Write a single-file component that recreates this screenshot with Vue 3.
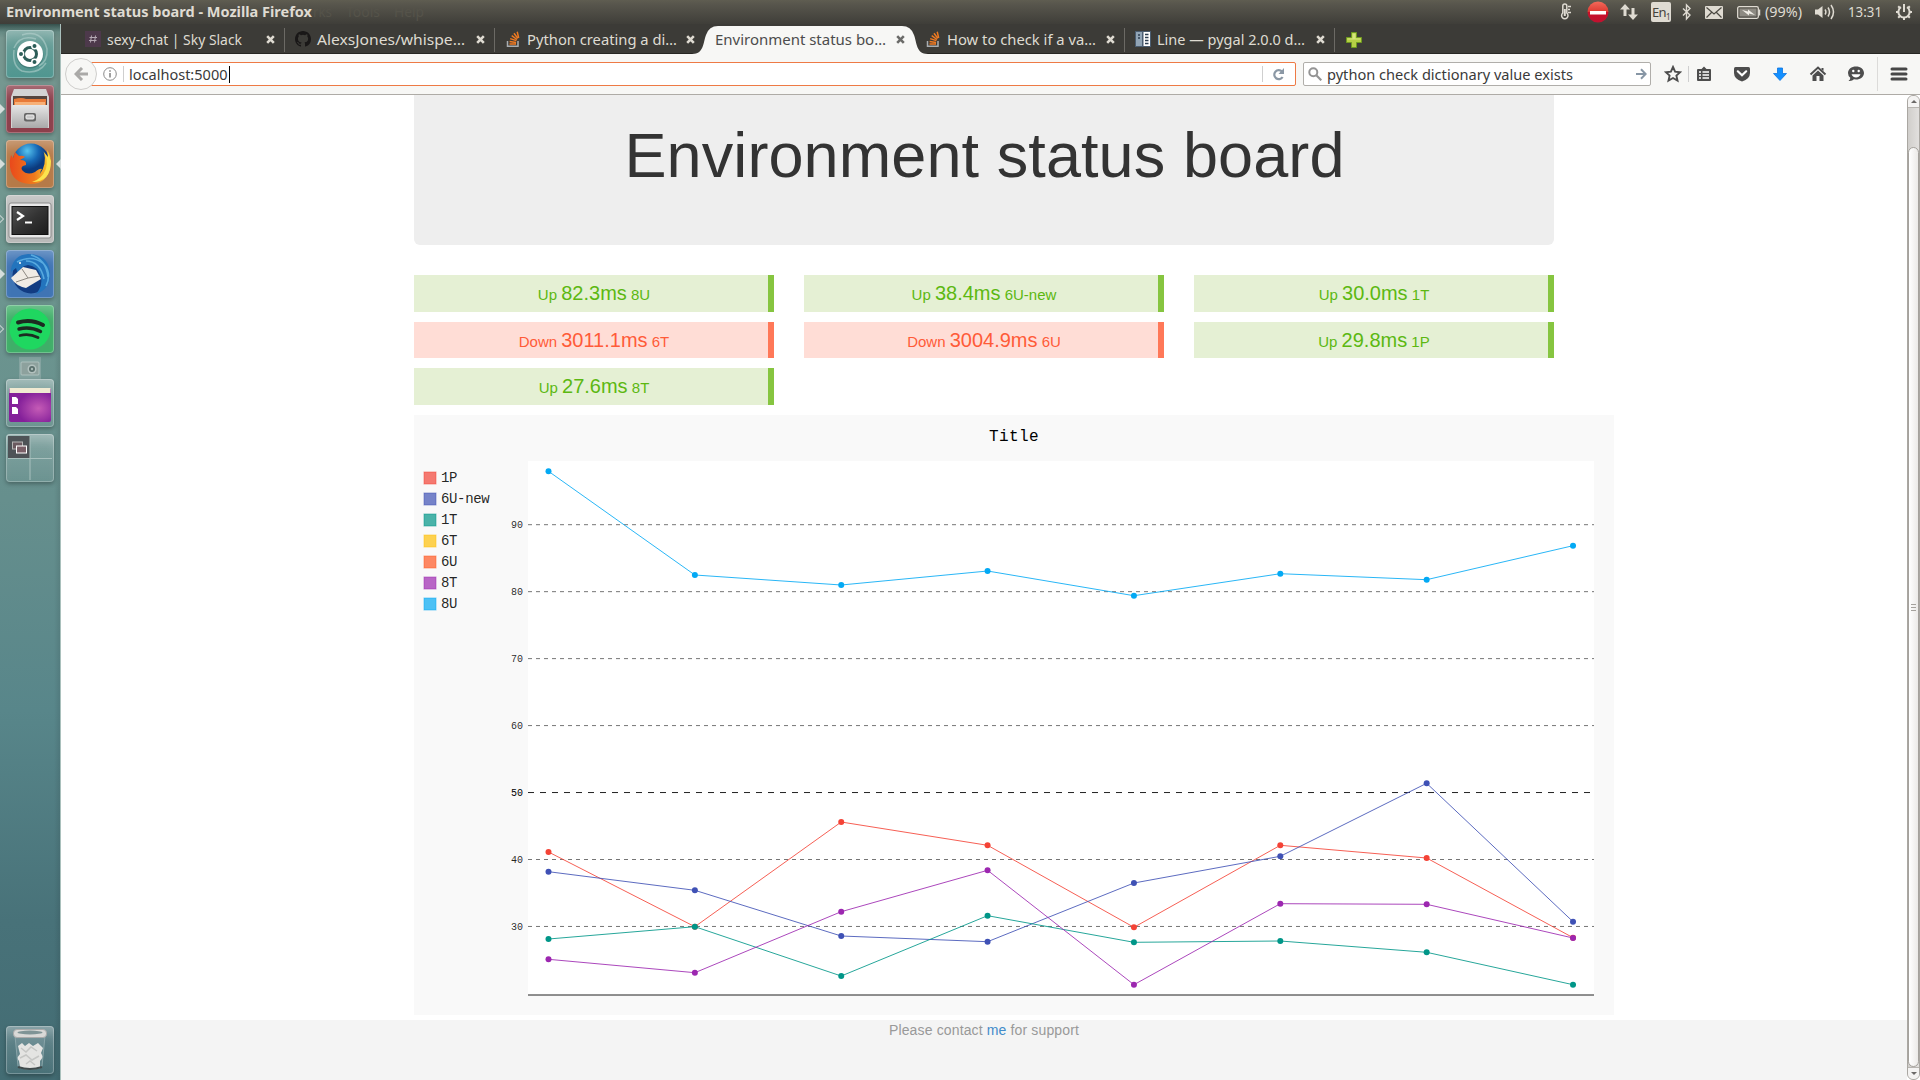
<script setup>
import { h } from 'vue'

// One-line label stretched to an exact width
const Label = (p) =>
  h('svg', { class: 'label', width: p.w + 2, height: 20, fill: 'currentColor' }, [
    h('text', { x: 0, y: p.y || 16, textLength: p.w, lengthAdjust: 'spacingAndGlyphs' }, p.t),
  ])
Label.props = ['t', 'w', 'y']

const tabs = [
  { icon: 'slack', text: 'sexy-chat | Sky Slack', w: 135 },
  { icon: 'github', text: 'AlexsJones/whispe…', w: 148 },
  { icon: 'so', text: 'Python creating a di…', w: 150 },
  { text: 'Environment status bo…', w: 171, active: true },
  { icon: 'so', text: 'How to check if a va…', w: 149 },
  { icon: 'docs', text: 'Line — pygal 2.0.0 d…', w: 148 },
]

const hosts = [
  { state: 'Up', time: '82.3ms', name: '8U' },
  { state: 'Up', time: '38.4ms', name: '6U-new' },
  { state: 'Up', time: '30.0ms', name: '1T' },
  { state: 'Down', time: '3011.1ms', name: '6T' },
  { state: 'Down', time: '3004.9ms', name: '6U' },
  { state: 'Up', time: '29.8ms', name: '1P' },
  { state: 'Up', time: '27.6ms', name: '8T' },
]

const legend = [
  ['1P', '#f44336'],
  ['6U-new', '#3f51b5'],
  ['1T', '#009688'],
  ['6T', '#ffc107'],
  ['6U', '#ff5722'],
  ['8T', '#9c27b0'],
  ['8U', '#03a9f4'],
]

const series = [
  { color: '#f44336', y: [437, 511.7, 407, 430.3, 512.3, 430.3, 443, 522.7] },
  { color: '#3f51b5', y: [456.7, 475.3, 521, 526.7, 468, 441.3, 368.3, 506.7] },
  { color: '#009688', y: [524, 511.7, 561, 500.7, 527.3, 526, 537.3, 569.7] },
  { color: '#9c27b0', y: [544.3, 557.7, 496.7, 455.3, 569.7, 488.7, 489.3, 523] },
  { color: '#03a9f4', y: [56.3, 160, 170, 156, 180.7, 158.7, 164.7, 130.7] },
]
const px = (i) => 134.5 + i * 146.36
const points = (ys) => ys.map((y, i) => `${px(i)},${y}`).join(' ')
const guides = [90, 80, 70, 60, 50, 40, 30].map((v) => ({ v, y: 109.7 + (90 - v) * 6.696 }))
</script>

<template>
  <div class="desktop">
    <header class="panel">
      <Label class="wintitle" t="Environment status board - Mozilla Firefox" :w="306" :y="15" />
      <div class="ghost"><Label t="rks" :w="19" :y="15" /><Label t="Tools" :w="34" :y="15" /><Label t="Help" :w="30" :y="15" /></div>
      <div class="tray">
        <svg width="12" height="18" viewBox="0 0 12 18" fill="none" stroke="#dfdbd2" stroke-width="1.5">
          <path d="M2.8 10V3a2 2 0 0 1 4 0v7a3.2 3.2 0 1 1-4 0z" /><path d="M4.8 6v7" stroke-width="2" /><path d="M8 3.5h3M8 6.5h2M8 9.500h3" stroke-width="1.300" />
        </svg>
        <svg class="t-stop" width="22" height="22" viewBox="0 0 22 22">
          <defs><linearGradient id="rd" x2="0" y2="1"><stop offset="0" stop-color="#f26a5a" /><stop offset=".48" stop-color="#dd3b33" /><stop offset=".5" stop-color="#c8102a" /><stop offset="1" stop-color="#c01230" /></linearGradient></defs>
          <circle cx="11" cy="11" r="10.500" fill="url(#rd)" /><rect x="3" y="10" width="16" height="3.500" fill="#fff" />
        </svg>
        <svg class="t-net" width="18" height="18" viewBox="0 0 18 18" fill="#dfdbd2"><path d="M5 1l5 5.500H6.500V13h-3V6.500H0zM13 17l-5-5.500h3.500V5h3v6.500H18z" /></svg>
        <div class="lang">En<sub>1</sub></div>
        <svg class="t-bt" width="10" height="18" viewBox="0 0 10 18" fill="none" stroke="#dfdbd2" stroke-width="1.400"><path d="M1 5.500l7 6.500-3.500 4V2L8 5.500 1 12.500" /></svg>
        <svg class="t-mail" width="18" height="13" viewBox="0 0 18 13"><rect width="18" height="13" rx="1" fill="#dfdbd2" /><path d="M1.500 1.500L9 8l7.500-6.500M1.500 11.500l5-5M16.500 11.500l-5-5" stroke="#4c4a43" stroke-width="1.200" fill="none" /></svg>
        <svg class="t-bat" width="24" height="13" viewBox="0 0 24 13"><rect x=".7" y=".7" width="20.600" height="11.600" rx="1.500" fill="none" stroke="#dfdbd2" stroke-width="1.300" /><rect x="2.500" y="2.500" width="17" height="8" fill="#8d8a82" /><path d="M22.500 3.500v6" stroke="#dfdbd2" stroke-width="1.500" /><path d="M5 4l6 1.500V3.500L18 9l-6-1.500v2z" fill="#f0ede6" /></svg>
        <Label class="t-pct" t="(99%)" :w="37" :y="15" />
        <svg class="t-vol" width="20" height="18" viewBox="0 0 20 18" fill="none" stroke="#dfdbd2" stroke-width="1.500"><path d="M0 6.500h3L7.500 3v12L3 11.500H0z" fill="#dfdbd2" stroke="none" /><path d="M10 6.500q1.800 2.500 0 5M13 4.500q3 4.500 0 9M16 2q5 7 0 14" /></svg>
        <Label class="t-time" t="13:31" :w="34" :y="15" />
        <svg class="t-gear" width="18" height="18" viewBox="0 0 18 18" fill="none" stroke="#dfdbd2"><path d="M6 4.200a5.600 5.600 0 1 0 6 0" stroke-width="2" /><path d="M9 1v8" stroke-width="2" /><path d="M3.200 3.200l2 2M14.800 3.200l-2 2M1 9h2.500M14.500 9H17M3.200 14.800l2-2M14.800 14.800l-2-2M9 14.500V17" stroke-width="2" /></svg>
      </div>
    </header>

    <div class="body">
      <aside class="launcher">
        <div class="app dash">
          <svg viewBox="0 0 48 48"><g fill="none" stroke="#b9d6d2" stroke-opacity=".55" stroke-width="1.500"><path d="M16 5q20-6 25 14 1 12-8 17M40 33q-8 12-24 8Q6 36 8 20M8 18Q14 4 30 9" /></g><circle cx="24" cy="25" r="13.500" fill="#1d4d4b" opacity=".35" /><circle cx="24" cy="24" r="13" fill="#fff" /><circle cx="24" cy="24" r="6.500" fill="none" stroke="#2c5d58" stroke-width="3" /><g stroke="#fff" stroke-width="1.400" fill="#2c5d58"><circle cx="15" cy="24" r="2.700" /><circle cx="28.500" cy="16" r="2.700" /><circle cx="28.500" cy="32" r="2.700" /></g></svg>
        </div>
        <div class="app files">
          <i class="pip" />
          <svg viewBox="0 0 48 48">
            <defs><linearGradient id="fc" x2="0" y2="1"><stop offset="0" stop-color="#e6e6e6" /><stop offset="1" stop-color="#a9a9a9" /></linearGradient></defs>
            <path d="M8 4h32l3 8v31H5V12z" fill="#d3d3d3" /><rect x="7" y="11" width="34" height="10" fill="#55453e" /><path d="M8 14q8-2 12 0h20v6H8z" fill="#e87a38" /><path d="M9 17h30v4H9z" fill="#f7b077" /><rect x="6" y="20" width="36" height="23" rx="1" fill="url(#fc)" /><rect x="18" y="28" width="12" height="8.500" rx="2" fill="#666" /><rect x="20" y="30" width="8" height="4" rx="1" fill="#c9c9c9" stroke="#eee" /></svg>
        </div>
        <div class="app firefox">
          <i class="pip" /><i class="pip right" />
          <svg viewBox="0 0 48 48">
            <defs><radialGradient id="gl" cx=".4" cy=".2"><stop offset="0" stop-color="#57c4ee" /><stop offset=".6" stop-color="#1667b4" /><stop offset="1" stop-color="#0b3a7e" /></radialGradient><linearGradient id="fx" x2="1"><stop offset="0" stop-color="#e9491c" /><stop offset=".6" stop-color="#f07a1c" /><stop offset="1" stop-color="#fbd735" /></linearGradient></defs>
            <circle cx="25" cy="22" r="18.500" fill="url(#gl)" />
            <path d="M5 15l2 3 2-6 4 4q4-1 6 1l-5 3q7 0 6 5-6 1-4 5 5 6 13 2 5-4 7-3-2 2-2 5 7-10 4-22l4 5-1-7q5 6 3 16-2 18-20 18-18-1-20-17-1-6 1-12z" fill="url(#fx)" /><path d="M36 10q7 8 4 19-4 10-14 13 19 0 19-21l-3-7v4z" fill="#fce34e" /></svg>
        </div>
        <div class="app terminal">
          <i class="pip hollow" />
          <svg viewBox="0 0 48 48"><defs><linearGradient id="tm" x2="1" y2="1"><stop offset="0" stop-color="#555" /><stop offset=".5" stop-color="#333" /><stop offset="1" stop-color="#1c1c1c" /></linearGradient></defs><rect x="3" y="8" width="42" height="35" rx="2" fill="#e8e8e8" stroke="#8b8b8b" /><rect x="6" y="11.500" width="36" height="28" fill="url(#tm)" stroke="#111" /><path d="M11 17l6 4-6 4" stroke="#fff" stroke-width="2.200" fill="none" /><path d="M19 27.500h7" stroke="#fff" stroke-width="2" /></svg>
        </div>
        <div class="app thunderbird">
          <i class="pip" />
          <svg viewBox="0 0 48 48">
            <circle cx="25" cy="25" r="18.500" fill="#123c82" />
            <path d="M5 19Q8 5 22 4q20 0 22 18 1 17-14 22 7-8 5-17-3-11-13-12-8 1-10 9l-2-6-5 4z" fill="#2374bd" />
            <path d="M5 28L17 17l13 3 5 9-15 9q-10-2-15-10z" fill="#f0ebe4" /><path d="M16 19l6 9 12-2M22 28l-12 4" stroke="#8c8780" fill="none" /><path d="M11 12Q26 4 38 14q8 10 2 22M20 11q14 0 18 18M25 5q15 4 17 22" stroke="#57a9df" stroke-width="1.600" fill="none" /><circle cx="14" cy="13" r="1" fill="#fff" /></svg>
        </div>
        <div class="app spotify">
          <i class="pip hollow" />
          <svg viewBox="0 0 48 48"><circle cx="24" cy="24" r="20.500" fill="#1fd760" /><g fill="none" stroke="#1c2b21" stroke-linecap="round"><path d="M12 17.500q13-4 25 2.500" stroke-width="4" /><path d="M13 24q11-3 21.500 2.500" stroke-width="3.400" /><path d="M14 30.500q9-2.500 18 2" stroke-width="2.800" /></g></svg>
        </div>
        <svg class="shot" width="22" height="22" viewBox="0 0 22 22"><rect width="22" height="22" fill="#a4b9b5" opacity=".45" /><rect x="2" y="5" width="18" height="13" rx="1" fill="#8da19d" stroke="#b8c9c5" stroke-width=".8" /><circle cx="13" cy="12" r="4.500" fill="#b3c2bf" /><circle cx="13" cy="12" r="3" fill="#5a706d" /><circle cx="13" cy="12" r="1.200" fill="#a9bbb7" /></svg>
        <div class="app glass">
          <svg viewBox="0 0 48 48"><defs><radialGradient id="pp" cx=".7" cy=".6"><stop offset="0" stop-color="#c55bb6" /><stop offset="1" stop-color="#84209a" /></radialGradient></defs><rect x="3" y="9" width="42" height="34" rx="2" fill="url(#pp)" /><rect x="3.500" y="9" width="41" height="5" fill="#f0ead2" /><path d="M6 18h4l2 2v5H6zM6 28h4l2 2v5H6z" fill="#fff" /></svg>
        </div>
        <div class="app glass">
          <svg viewBox="0 0 48 48"><rect x="2" y="2" width="22" height="22" fill="#4e5357" /><path d="M24 2v44M2 24.500h44" stroke="#a8c0bd" stroke-width="1" /><rect x="6.500" y="8" width="10" height="7" fill="#6b5a60" stroke="#b5b5b5" /><rect x="10.500" y="12" width="10" height="7" fill="#7a6068" stroke="#fff" /></svg>
        </div>
        <div class="app glass trash">
          <svg viewBox="0 0 48 48"><path d="M9 9l3 31q1 4 12 4t12-4l3-31z" fill="#a9c0c4" opacity=".2" /><path d="M12 20l4-3 3 3 4-3 4 3 5-3 5 5-2 5 2 4-3 4v6q-10 4-20 0l-1-6-2-3 3-4z" fill="#e4e4e2" /><path d="M15 22l5 4 5-5 6 4M14 32l6-3 6 5 7-4M20 38l4-3 5 4" stroke="#c5c6c4" fill="none" stroke-width="1.500" /><path d="M9 10l3 30q1 3 12 3t12-3l3-30" stroke="#8aa5a9" fill="none" /><path d="M12 41q12 4 24 0" stroke="#404b4c" stroke-width="2" fill="none" /><rect x="7.500" y="3.500" width="33" height="8" rx="3.500" fill="#d9d9d7" stroke="#aaa" /><ellipse cx="24" cy="6.500" rx="12.500" ry="1.900" fill="#7f9496" /></svg>
        </div>
      </aside>

      <main class="browser">
        <nav class="tabs">
          <div v-for="(t, i) in tabs" :key="i" class="tab" :class="{ active: t.active, sep: !t.active && i !== 2 }">
            <svg v-if="t.active" class="shape" width="236" height="28" viewBox="0 0 236 28"><path d="M0 28C12 28 11 17 14 9Q17 0 26 0H210Q219 0 222 9C225 17 224 28 236 28z" fill="#f7f7f5" /></svg>
            <svg v-if="t.icon === 'slack'" class="fav" viewBox="0 0 16 16"><rect width="16" height="16" fill="#4d394b" /><path d="M6.500 4.500l-1 7M10.500 4.500l-1 7M4.500 6.500h7.500M4 9.500h7.500" stroke="#b5a9b4" fill="none" /></svg>
            <svg v-else-if="t.icon === 'github'" class="fav" viewBox="0 0 16 16"><path fill="#191717" d="M8 0C3.580 0 0 3.580 0 8c0 3.540 2.290 6.530 5.470 7.590.4.070.55-.17.55-.38v-1.490c-2.010.37-2.530-.49-2.690-.94-.09-.23-.48-.94-.82-1.130-.28-.15-.68-.52-.01-.53.63-.01 1.080.58 1.230.82.720 1.210 1.870.87 2.330.66.070-.52.28-.87.51-1.070-1.780-.2-3.640-.89-3.640-3.950 0-.87.310-1.590.82-2.150-.08-.2-.36-1.020.08-2.120 0 0 .67-.21 2.200.82a7.400 7.400 0 0 1 4 0c1.530-1.040 2.200-.82 2.200-.82.440 1.100.16 1.920.08 2.120.51.56.82 1.270.82 2.150 0 3.070-1.870 3.750-3.650 3.950.29.25.54.73.54 1.480v2.200c0 .21.15.46.55.38A8 8 0 0 0 16 8c0-4.420-3.580-8-8-8z" /></svg>
            <svg v-else-if="t.icon === 'so'" class="fav so" viewBox="0 0 16 16" fill="none"><path d="M2.500 10v5.300h10.500V10" stroke="#a9adb0" stroke-width="1.500" /><g stroke="#ef7a22" stroke-width="1.500"><path d="M4.500 13h6.500M4.600 10.500l6.500.9M5.200 7.600l6.200 2M6.700 4.700l5.300 3.800M9 2.200l3.800 5.200M12.200.8l1.500 6.200" /></g></svg>
            <svg v-else-if="t.icon === 'docs'" class="fav" viewBox="0 0 16 16"><rect width="16" height="16" fill="#4b5d70" /><rect x="1" y="1" width="6" height="14" fill="#91a4b5" /><rect x="8.500" y="1" width="6.500" height="14" fill="#fff" /><path d="M3 4h2M3 7h2M10 3.500h3.500M10 6.500h3.500M10 9.500h3.500M10 12.500h3.500" stroke="#2d3e50" stroke-width="1.500" /></svg>
            <Label :t="t.text" :w="t.w" />
            <svg class="close" width="9" height="9" viewBox="0 0 9 9"><path d="M1.200 1.200l6.600 6.600M7.800 1.200L1.200 7.800" stroke="currentColor" stroke-width="2.600" /></svg>
          </div>
          <svg class="plus" width="16" height="16" viewBox="0 0 16 16"><path d="M5.500.5h5v5h5v5h-5v5h-5v-5h-5v-5h5z" fill="#b6cf46" stroke="#6f9a1f" /><path d="M6.500 1.500h3v5h5v1h-13v-1h5z" fill="#d6e67c" /></svg>
        </nav>

        <div class="toolbar">
          <div class="back"><svg width="14" height="14" viewBox="0 0 14 14"><path d="M8 1L2 7l6 6M2.500 7H14" fill="none" stroke="#aaa9a7" stroke-width="3" /></svg></div>
          <div class="url">
            <svg width="14" height="14" viewBox="0 0 14 14"><circle cx="7" cy="7" r="6.300" fill="none" stroke="#8a8a8a" /><path d="M7 6v4.500M7 3.300v1.500" stroke="#808080" stroke-width="1.500" /></svg>
            <i class="bar" />
            <Label t="localhost:5000" :w="98.5" /><i class="caret" />
            <i class="bar end" />
            <svg class="reload" width="13" height="13" viewBox="0 0 13 13"><path d="M10 3.500A4.500 4.500 0 1 0 10.600 9" fill="none" stroke="#8b98a5" stroke-width="2.200" /><path d="M12 0v6H6.500z" fill="#8b98a5" /></svg>
          </div>
          <div class="search">
            <svg width="14" height="14" viewBox="0 0 14 14"><circle cx="5.300" cy="5.300" r="4" fill="none" stroke="#949494" stroke-width="2" /><path d="M8.300 8.300l5 5" stroke="#949494" stroke-width="2.200" /></svg>
            <Label t="python check dictionary value exists" :w="246" />
            <svg class="go" width="11" height="12" viewBox="0 0 11 12"><path d="M0 6h9M5 1.200L9.700 6 5 10.800" fill="none" stroke="#8796a5" stroke-width="2" /></svg>
          </div>
          <div class="tools">
            <svg viewBox="0 0 18 18"><path d="M9 2l2.100 4.700 5.100.5-3.800 3.400 1.100 5L9 13l-4.500 2.600 1.100-5L1.800 7.200l5.100-.5z" fill="none" stroke="#4d4d4d" stroke-width="1.900" /></svg>
            <i class="bar" />
            <svg class="first" viewBox="0 0 18 18"><path d="M3 4h3.500L9 1.500 11.500 4H15q1 0 1 1v10q0 1-1 1H3q-1 0-1-1V5q0-1 1-1z" fill="#4d4d4d" /><path d="M4 7h2M7.500 7H14M4 10h2M7.500 10H14M4 13h2M7.500 13H14" stroke="#fff" stroke-width="1.600" /></svg>
            <svg viewBox="0 0 18 18"><path d="M2.500 2h13q1.500 0 1.500 1.500V8q0 6-8 8.500Q1 14 1 8V3.500Q1 2 2.500 2z" fill="#4d4d4d" /><path d="M4.800 6.300L9 10.300l4.200-4" fill="none" stroke="#fff" stroke-width="2.200" stroke-linecap="round" /></svg>
            <svg viewBox="0 0 18 18"><path d="M6.500 3h5v5.500H15.500L9 15.500 2.500 8.500H6.500z" fill="#1490ff" stroke="#0b74e0" stroke-width=".8" /></svg>
            <svg viewBox="0 0 18 18"><path d="M1.500 9.500L9 2.500l7.500 7" fill="none" stroke="#4d4d4d" stroke-width="2" /><path d="M9 5.500l5.500 5V16h-4v-5h-3v5h-4v-5.500zM12.500 3h2v3l-2-1.500z" fill="#4d4d4d" /></svg>
            <svg viewBox="0 0 18 18"><path d="M9 1.500c4.500 0 8 2.700 8 6.500s-3.500 6.500-8 6.500l-2-.2Q5 16.500 1.500 16 3.500 14.500 3.300 12.700 1 11 1 8c0-3.800 3.500-6.500 8-6.500z" fill="#4d4d4d" /><circle cx="6.300" cy="6" r="1.200" fill="#fff" /><circle cx="11.700" cy="6" r="1.200" fill="#fff" /><path d="M4.500 9.200h9Q12 12.500 9 12.500T4.500 9.200z" fill="#fff" /></svg>
            <i class="bar tall" />
            <svg class="menu" viewBox="0 0 18 18"><path d="M2 4h14M2 9h14M2 14h14" stroke="#474747" stroke-width="3" stroke-linecap="round" /></svg>
          </div>
        </div>

        <div class="viewport">
          <div class="page">
            <div class="container">
              <div class="jumbotron"><h1>Environment status board</h1></div>
              <div class="hosts">
                <div v-for="s in hosts" :key="s.name" class="host" :class="s.state.toLowerCase()">
                  {{ s.state }} <b>{{ s.time }}</b> {{ s.name }}
                </div>
              </div>
              <svg class="chart" width="1200" height="600">
                <rect width="1200" height="600" fill="#f9f9f9" />
                <rect x="114" y="46" width="1066" height="534" fill="#fff" />
                <text x="600" y="26" class="title">Title</text>
                <g v-for="([name, color], i) in legend" :key="name">
                  <rect x="10" :y="57 + i * 21" width="12" height="12" :fill="color" :stroke="color" fill-opacity=".7" stroke-opacity=".5" />
                  <text x="27" :y="67 + i * 21" class="key">{{ name }}</text>
                </g>
                <g v-for="g in guides" :key="g.v" :class="['guide', { major: g.v === 50 }]">
                  <path :d="`M114 ${g.y}h1066`" />
                  <text x="109" :y="g.y + 3.5">{{ g.v }}</text>
                </g>
                <path d="M114 580h1066" stroke="#000" stroke-opacity=".87" />
                <g v-for="s in series" :key="s.color">
                  <polyline :points="points(s.y)" fill="none" :stroke="s.color" stroke-opacity=".85" />
                  <circle v-for="(y, i) in s.y" :key="i" :cx="px(i)" :cy="y" r="3" :fill="s.color" />
                </g>
              </svg>
            </div>
            <footer>Please contact <a>me</a> for support</footer>
          </div>
          <div class="scrollbar">
            <span class="arrow" />
            <div class="thumb"><i /><i /><i /></div>
            <span class="arrow down" />
          </div>
        </div>
      </main>
    </div>
  </div>
</template>

<style>
body { margin: 0; overflow: hidden; }
</style>

<style scoped>
.desktop { width: 1920px; height: 1080px; display: flex; flex-direction: column; overflow: hidden; background: #fff; font: 15px "Noto Sans", sans-serif; }
svg { display: block; flex: none; }
.label { overflow: visible; }

.panel { height: 24px; flex: none; display: flex; align-items: center; background: linear-gradient(#5f5d51, #57554c 20%, #3f3e39); color: #dfdbd2; padding-left: 6px; box-sizing: border-box; }
.wintitle { font-weight: bold; font-size: 14.500px; }
.ghost { display: flex; gap: 12px; color: #55534a; margin-left: -1px; }
.tray { display: flex; align-items: center; margin-left: auto; padding-right: 7px; }
.t-stop { margin-left: 15px; }
.t-net { margin-left: 11px; margin-right: 1px; }
.lang { margin-left: 12px; width: 20px; height: 20px; border-radius: 2px; background: #dfdbd2; color: #45433d; font-size: 13px; line-height: 20px; text-align: center; letter-spacing: -.6px; white-space: nowrap; }
.lang sub { font-size: 8px; line-height: 0; vertical-align: -3px; }
.t-bt { margin-left: 11px; margin-right: 1px; }
.t-mail { margin-left: 12px; }
.t-bat { margin-left: 14px; }
.t-pct { margin-left: 4px; }
.t-vol { margin-left: 11px; }
.t-time { margin-left: 13px; }
.t-gear { margin-left: 11px; }

.body { flex: 1; display: flex; min-height: 0; }
.launcher { width: 61px; flex: none; box-sizing: border-box; border-right: 1px solid #a9c0bc; padding: 6px 0 6px 6px; display: flex; flex-direction: column; gap: 7px; background: linear-gradient(#35504c, #668a84 8px, transparent 14px), linear-gradient(90deg, transparent 54px, rgba(0, 0, 0, .09)), linear-gradient(#779790, #6f9790 20%, #668f8d 45%, #58868a 65%, #487279 85%, #436c73); }
.app { position: relative; width: 48px; height: 48px; flex: none; border-radius: 4px; box-shadow: inset 0 0 0 1px rgba(255, 255, 255, .25), inset 0 12px 12px -6px rgba(255, 255, 255, .28), 0 2px 4px rgba(0, 0, 0, .3); }
.app svg { width: 48px; height: 48px; }
.dash { background: linear-gradient(#6fa09a, #4f9690); }
.files { background: #8c3f4b; }
.firefox { background: #b67a48; }
.terminal { background: #b9bab9; }
.thunderbird { background: #3f74b4; }
.spotify { background: #3fae68; }
.glass { background: linear-gradient(rgba(255, 255, 255, .18), rgba(255, 255, 255, .03)); }
.shot { margin: -3px 0 -7px 13px; }
.trash { margin-top: auto; }
.pip { position: absolute; left: -6px; top: 19px; border: 5px solid transparent; border-left-color: #d5dedc; border-right: 0; }
.pip.right { left: 50px; border-left: 0; border-right: 5px solid #d5dedc; }
.pip.hollow { width: 4px; height: 4px; left: -9px; top: 21px; border: 1px solid #c5d2cf; transform: rotate(45deg); }

.browser { flex: 1; display: flex; flex-direction: column; min-width: 0; }
.tabs { height: 30px; box-sizing: border-box; flex: none; background: #3c3b37; border-bottom: 1px solid #272623; display: flex; align-items: stretch; padding-left: 14px; }
.tab { position: relative; width: 210px; box-sizing: border-box; display: flex; align-items: center; padding: 1px 9px 0 10px; color: #dfdbd2; border-right: 1px solid transparent; }
.tab.sep { border-image: linear-gradient(transparent 5px, #6c6a65 5px, #6c6a65 27px, transparent 27px) 1; border-width: 0 1px 0 0; border-style: solid; }
.tab:nth-child(5) { z-index: 1; }
.fav { width: 16px; height: 16px; margin-right: 6px; }
.fav.so { margin-right: 6px; margin-left: 0; }
.tab.active { color: #4c4c4c; z-index: 2; padding-left: 10px; }
.shape { position: absolute; left: -13px; top: 2px; }
.active .label, .active .close { position: relative; }
.close { margin-left: auto; color: #dfdbd2; }
.active .close { color: #6b6b69; }
.plus { margin: 8px 0 0 11px; }

.toolbar { height: 41px; flex: none; box-sizing: border-box; background: #f7f7f5; border-bottom: 1px solid #aeaba6; display: flex; align-items: center; padding: 0 12px 0 4px; color: #3a3a3a; }
.back { position: relative; z-index: 1; width: 32px; height: 32px; box-sizing: border-box; border: 1px solid #cfcecc; border-radius: 50%; background: #f7f7f5; display: flex; align-items: center; justify-content: center; }
.url, .search { height: 24px; box-sizing: border-box; background: #fff; border: 1px solid #ee7a45; border-radius: 2px; display: flex; align-items: center; }
.url { width: 1208px; margin-left: -9px; padding: 0 10px 0 14px; }
.bar { width: 1px; height: 16px; background: #cfcfcf; }
.url .bar { margin: 0 5px 0 6px; }
.url .bar.end { margin: 0 9px 0 auto; }
.caret { width: 1px; height: 17px; background: #000; margin-left: -1px; }
.search { width: 348px; margin-left: 7px; border-color: #b0aeaa; padding: 0 3px 0 4px; }
.search .label { margin-left: 5px; }
.go { margin-left: auto; }
.tools { display: flex; align-items: center; gap: 20px; padding-left: 13px; }
.tools svg { width: 18px; height: 18px; }
.tools .bar { margin: 0 -14px; }
.tools .tall { height: 34px; background: #dcdbd9; margin: 0 -8px; }

.viewport { flex: 1; min-height: 0; display: flex; }
.page { flex: 1; display: flex; flex-direction: column; font-family: "Liberation Sans", Arial, sans-serif; }
.container { width: 1140px; margin-left: 353px; flex: none; }
.jumbotron { height: 150px; background: #eee; border-radius: 0 0 6px 6px; text-align: center; overflow: hidden; }
h1 { margin: 26px 0 0; font-size: 63px; line-height: 69px; font-weight: 500; letter-spacing: .09px; text-indent: 1px; color: #333; white-space: nowrap; }
.hosts { display: grid; grid-template-columns: repeat(3, 360px); grid-auto-rows: 36.600px; gap: 10px 30px; margin: 30px 0 10px; }
.host { font-size: 15px; line-height: 37px; text-align: center; position: relative; }
.host b { font-weight: normal; font-size: 20px; }
.host::after { content: ""; position: absolute; top: 0; bottom: 0; right: 0; width: 6px; background: #86c540; }
.up { background: #e5f0d4; color: #5cb811; }
.down { background: #ffddd6; color: #ff5b38; }
.down::after { background: #ff7858; }
.chart { font-family: "Liberation Mono", monospace; }
.title { font-size: 16px; letter-spacing: .4px; text-anchor: middle; }
.key { font-size: 14px; letter-spacing: -.35px; fill: rgba(0, 0, 0, .87); }
.guide path { stroke: rgba(0, 0, 0, .54); stroke-dasharray: 4, 4; }
.guide text { font-size: 10px; text-anchor: end; fill: rgba(0, 0, 0, .85); }
.guide.major path { stroke: rgba(0, 0, 0, .87); stroke-dasharray: 6, 6; }
.guide.major text { fill: #000; }
footer { margin-top: 5px; flex: 1; background: #f4f4f4; text-align: center; font-size: 14px; letter-spacing: .14px; line-height: 20px; color: #999; }
footer a { color: #428bca; }

.scrollbar { width: 13px; flex: none; box-sizing: border-box; border: 1px solid #aaa7a2; border-radius: 6px; background: linear-gradient(90deg, #d0cecb, #e2e0de); display: flex; flex-direction: column; align-items: center; }
.arrow { width: 11px; height: 12px; box-sizing: border-box; border-radius: 5px 5px 0 0; background: #f4f3f2; border-bottom: 1px solid #b8b5b1; display: flex; align-items: center; justify-content: center; }
.arrow::before { content: ""; border: 3px solid transparent; border-bottom-color: #6b6967; border-top: 0; }
.arrow.down { transform: scaleY(-1); }
.thumb { flex: 1; width: 11px; margin-top: 39px; box-sizing: border-box; border: 1px solid #a5a29d; border-radius: 6px; background: linear-gradient(90deg, #fff, #eceae8); display: flex; flex-direction: column; align-items: center; justify-content: center; gap: 2px; }
.thumb i { width: 5px; height: 1px; background: #a5a29d; }
</style>
